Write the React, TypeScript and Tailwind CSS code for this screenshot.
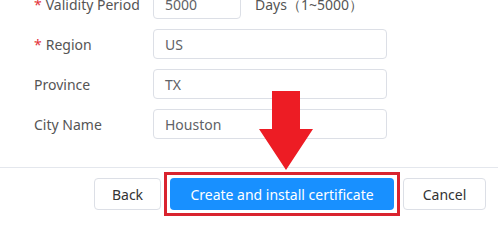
import type { ReactNode } from 'react'

const font = { fontFamily: '"Noto Sans", "Open Sans", Arial, sans-serif' }

function Row({ label, required, children }: { label: string; required?: boolean; children: ReactNode }) {
  return (
    <div className="flex h-[30px] items-center">
      <div className="w-[119px] shrink-0 text-[14px] text-[#555]">
        {required && <span className="mr-[4px] text-[#e3343a]">*</span>}
        {label}
      </div>
      {children}
    </div>
  )
}

function Input({ value, w = 'w-[234px]' }: { value: string; w?: string }) {
  return (
    <div className={`${w} flex h-[30px] items-center rounded-[4px] border border-[#dcdfe6] bg-white px-[11px] text-[14px] text-[#606266]`}>
      {value}
    </div>
  )
}

export default function App() {
  return (
    <div className="relative h-[238px] w-[498px] overflow-hidden bg-white" style={font}>
      <div className="-mt-[11px] flex flex-col gap-[10px] pl-[34px]">
        <Row label="Validity Period" required>
          <Input value="5000" w="w-[88px]" />
          <span className="ml-[14px] text-[14px] text-[#555]">Days（1~5000）</span>
        </Row>
        <Row label="Region" required>
          <Input value="US" />
        </Row>
        <Row label="Province">
          <Input value="TX" />
        </Row>
        <Row label="City Name">
          <Input value="Houston" />
        </Row>
      </div>

      <div className="mt-[28px] border-t border-[#e4e7ed]" />

      <div className="flex justify-end gap-[9px] pr-[12px] pt-[10px]">
        <button className="h-[32px] w-[67px] rounded-[4px] border border-[#dcdfe6] bg-white text-[14px] text-[#333]">
          Back
        </button>
        <div className="relative">
          <button className="h-[32px] w-[224px] rounded-[4px] bg-[#1890ff] text-[14px] text-white">
            Create and install certificate
          </button>
          <div className="pointer-events-none absolute -inset-[6px] border-[3px] border-[#d9232e]" />
        </div>
        <button className="h-[32px] w-[83px] rounded-[4px] border border-[#dcdfe6] bg-white text-[14px] text-[#333]">
          Cancel
        </button>
      </div>

      <svg className="absolute left-[259px] top-[91px]" width="54" height="79" viewBox="0 0 54 79">
        <polygon points="13,0 41,0 41,38 54,38 27,79 0,38 13,38" fill="#ed1c24" />
      </svg>
    </div>
  )
}
